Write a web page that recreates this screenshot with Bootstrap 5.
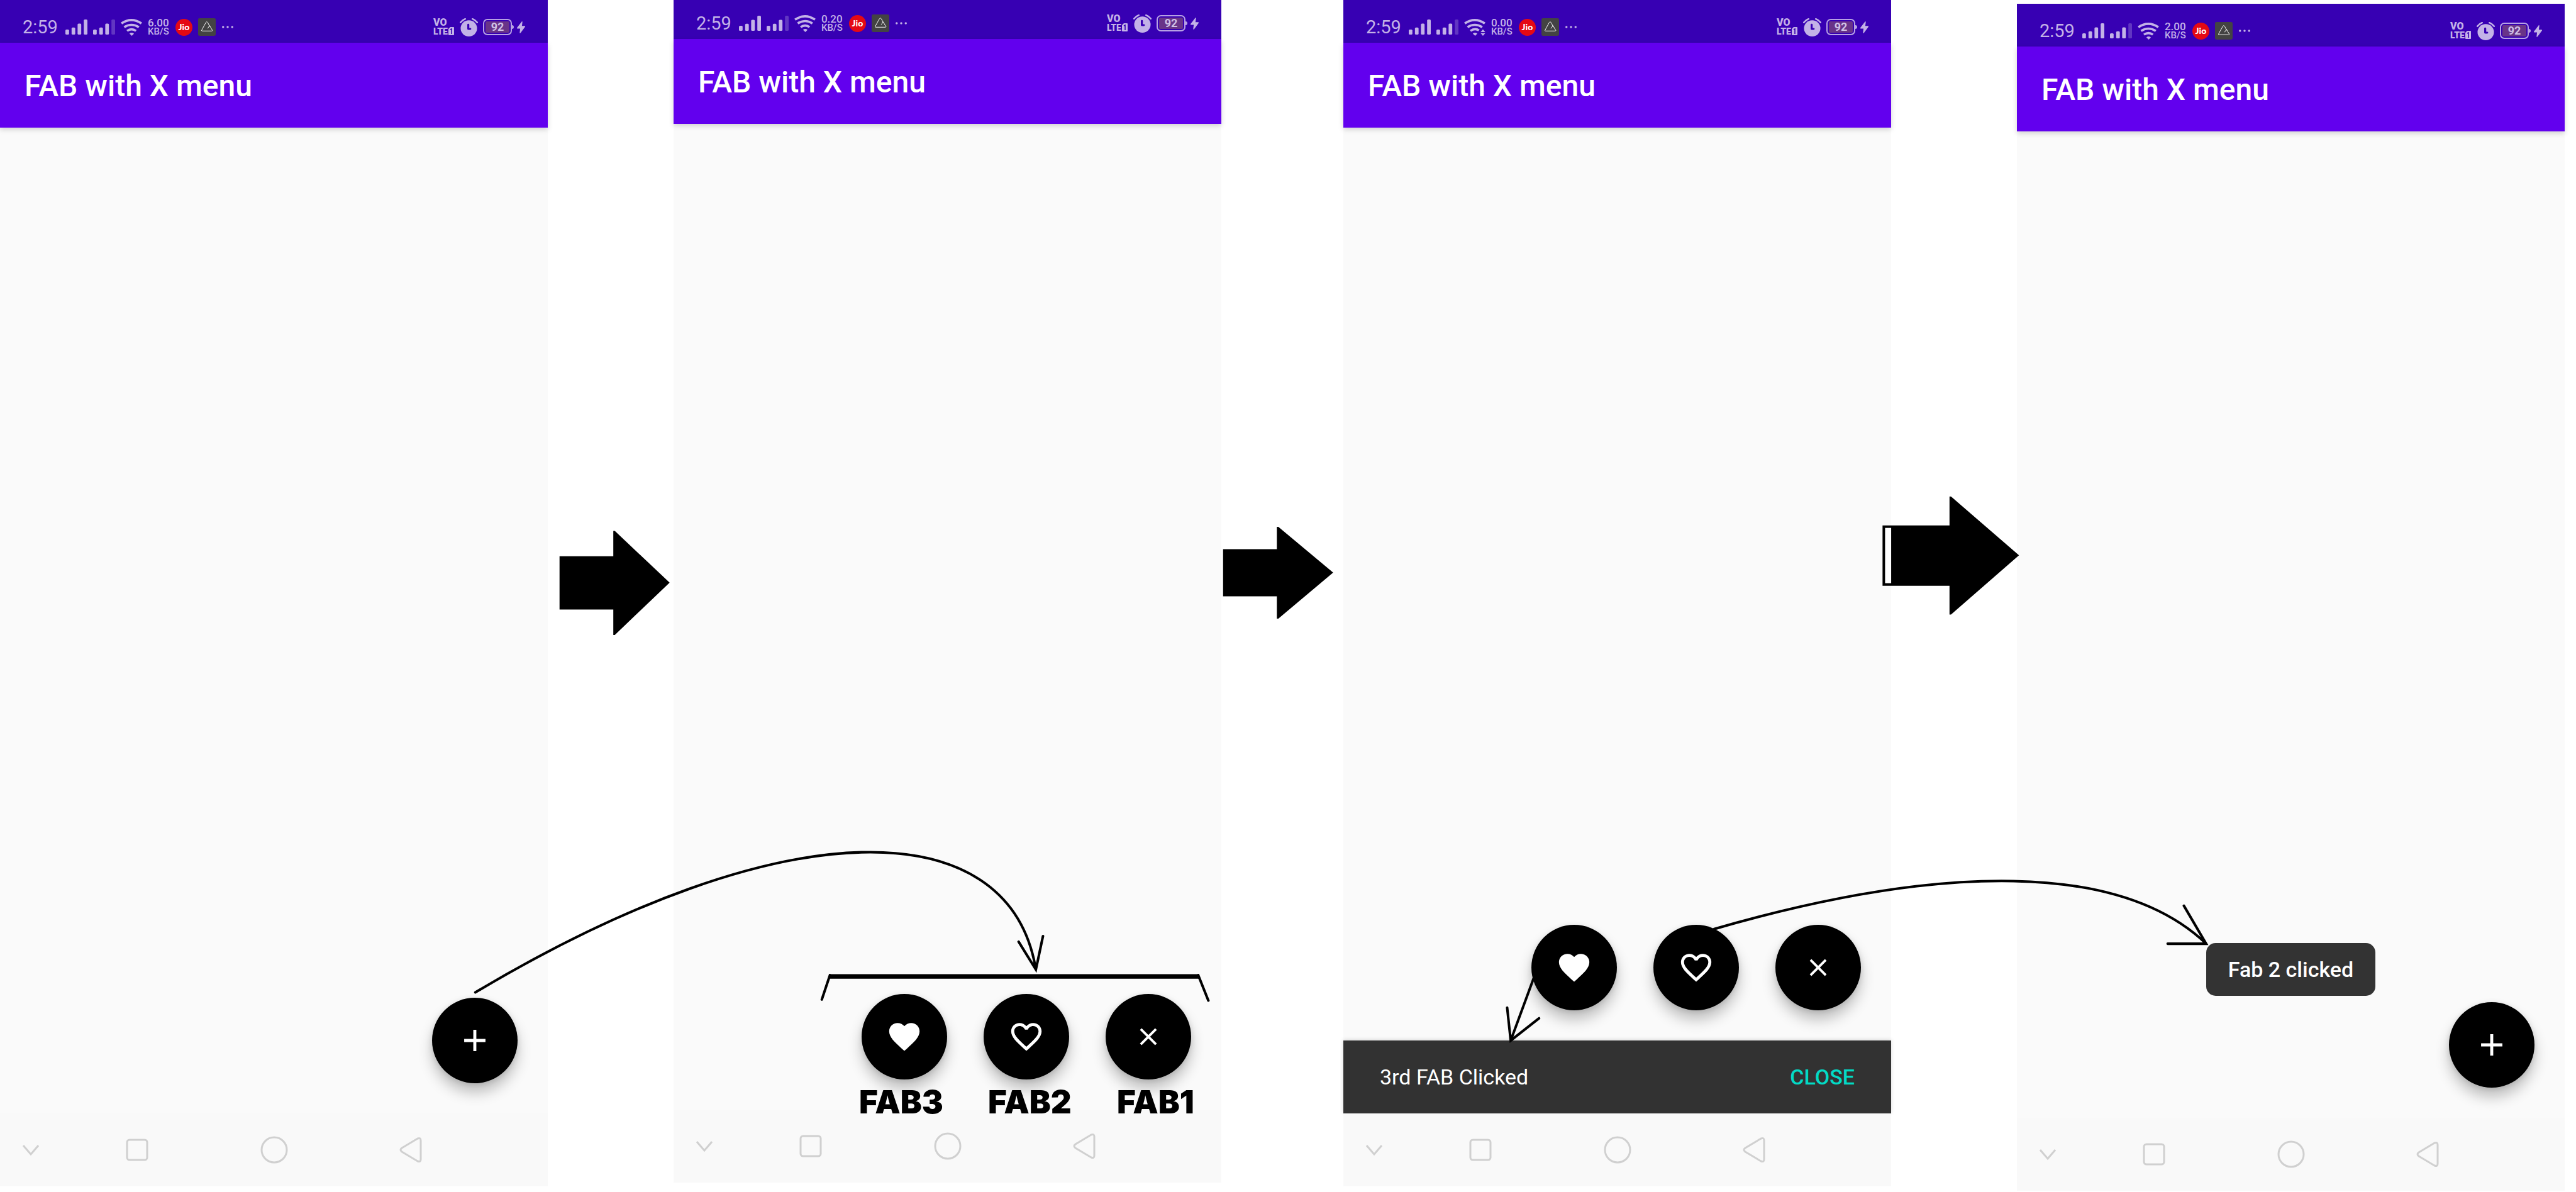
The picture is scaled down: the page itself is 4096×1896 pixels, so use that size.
<!DOCTYPE html>
<html lang="en">
<head>
<meta charset="utf-8">
<meta name="viewport" content="width=device-width, initial-scale=1">
<title>FAB with X menu</title>
<link rel="stylesheet" href="https://cdn.jsdelivr.net/npm/bootstrap@5.3.0/dist/css/bootstrap.min.css">
<style>
  body { font-family: Roboto, "Liberation Sans", sans-serif; background: #fff; overflow-x: hidden; }
  .storyboard { min-height: 100vh; padding-right: 18px; }
  .spacer { width: 200px; }
  .spacer-narrow { width: 194px; }

  .phone { flex: 1 1 0; min-width: 0; margin-bottom: 9px; background: #fafafa; }
  .phone-raised { margin-bottom: 15px; }
  .phone-raised .status-strip { height: 62px; }
  .phone-lowered { margin-top: 6px; margin-bottom: 2px; }

  .status-strip { height: 68px; padding: 0 36px 11px 36px; background: #3700b3; color: #c3b2e7; }
  .status-set { height: 28px; gap: 9px; }
  .status-time { font-size: 29px; line-height: 28px; margin-right: 3px; }
  .status-rate { width: 33px; font-size: 17px; line-height: 14px; font-weight: 500; }
  .status-rate span { display: block; font-size: 15px; }
  .carrier { width: 27px; height: 27px; margin-left: 2px; background: #e50914; color: #fff; font: 900 14px/26px Lato, sans-serif; text-align: center; }
  .volte { width: 33px; font-size: 16px; line-height: 14px; font-weight: 900; }
  .volte span { font-size: 14px; }
  .gauge { width: 46px; height: 26px; border: 2px solid #b7a2e4; border-radius: 7px; margin: 0 -1px; padding: 2px; }
  .gauge::after { content: ""; left: 44px; top: 8px; width: 3px; height: 6px; border-radius: 0 3px 3px 0; background: #b7a2e4; position: absolute; }
  .gauge span { flex: 1; background: #693488; color: #d0c2e6; border-radius: 2px; font-size: 18px; line-height: 18px; font-weight: 700; text-align: center; }

  .app-bar { height: 135px; padding: 2px 39px 0; background: #6200ee; color: #fff; box-shadow: 0 3px 8px rgba(0,0,0,.17); z-index: 1; }
  .app-title { font-size: 48px; line-height: 56px; font-weight: 500; }

  .fab-row { gap: 58px; padding: 0 48px 48px; }
  .fab { width: 136px; height: 136px; background: #000; color: #fff; border: 0; box-shadow: 0 15px 22px rgba(0,0,0,.24), 0 2px 8px rgba(0,0,0,.12); }
  .fab:hover { background: #222; color: #fff; }
  .fab svg { width: 58px; height: 58px; fill: currentColor; }

  .fab-labels { left: 295px; bottom: 98px; z-index: 2; }
  .fab-labels span { width: 205px; font: 900 51px/60px Inter, "Liberation Sans", sans-serif; color: #000; }

  .snack { height: 116px; padding: 0 58px; background: #323232; color: #fff; font-size: 34px; box-shadow: 0 -1px 6px rgba(0,0,0,.15); }
  .snack .btn { font-size: 34px; font-weight: 500; color: #03dac5; border: 0; }
  .toast-note { height: 84px; padding: 0 35px; margin-bottom: 10px; border-radius: 15px; background: #333; color: #fff; font-size: 34px; font-weight: 500; }

  .nav-keys { height: 116px; background: #f9f9f9; }
  .nav-keys .btn { border: 0; color: #d0d0d0; }
  .nav-keys svg { fill: none; stroke: currentColor; stroke-width: 3; }
  .key-hide { width: 12.5%; padding: 0 0 0 36px; text-align: left; }
  .key-set { width: 75%; }

  .notes { pointer-events: none; z-index: 3; width: 100%; height: auto; }
  .notes .pen { fill: none; stroke: #000; stroke-width: 5; stroke-linecap: round; }
</style>
<script src="https://cdn.jsdelivr.net/npm/bootstrap@5.3.0/dist/js/bootstrap.bundle.min.js"></script>
</head>
<body>
<svg width="0" height="0" class="position-absolute" aria-hidden="true">
  <symbol id="signal" viewBox="0 0 121 90" preserveAspectRatio="none"><g fill="#c3b2e7"><rect y="60" width="20" height="30" rx="6"/><rect x="34" y="48" width="20" height="42" rx="6"/><rect x="67" y="24" width="20" height="66" rx="6"/><rect x="101" width="20" height="90" rx="6"/></g></symbol>
  <symbol id="signal-low" viewBox="0 0 121 90" preserveAspectRatio="none"><g fill="#c3b2e7"><rect y="60" width="20" height="30" rx="6"/><rect x="34" y="48" width="20" height="42" rx="6"/><rect x="67" y="24" width="20" height="66" rx="6"/><rect x="101" width="20" height="90" rx="6" fill="#6136c2"/></g></symbol>
  <symbol id="wifi" viewBox="0 0 118 100" preserveAspectRatio="none"><g fill="none" stroke="#c3b2e7" stroke-width="13"><path d="M4 27Q59 -13 114 27"/><path d="M19 49Q59 21 100 49"/><path d="M35 71Q60 52 84 71"/></g><path d="M48 87Q60 76 73 87L61 100Z" fill="#c3b2e7"/></symbol>
  <symbol id="wifi-busy" viewBox="0 0 118 100" preserveAspectRatio="none"><g fill="none" stroke="#c3b2e7" stroke-width="13"><path d="M4 27Q59 -13 114 27"/><path d="M19 49Q59 21 100 49"/><path d="M35 71Q60 52 82 68"/></g><path d="M48 87Q60 76 73 87L61 100ZM91 78L104 62L117 78ZM91 84L104 100L117 84Z" fill="#c3b2e7"/></symbol>
  <symbol id="peak" viewBox="0 0 98 105" preserveAspectRatio="none"><rect width="98" height="105" rx="8" fill="#434343"/><path d="M53 61L64 44L80 73Q80 76 76 76H22Q18 76 20 71L43 26Q48 16 54 26L65 50" fill="none" stroke="#fff" stroke-width="3.5"/></symbol>
  <symbol id="dots" viewBox="0 0 72 16"><g fill="#c3b2e7"><circle cx="7" cy="8" r="7"/><circle cx="36" cy="8" r="7"/><circle cx="65" cy="8" r="7"/></g></symbol>
  <symbol id="sim" viewBox="0 0 9 13"><path d="M3 0H8Q9 0 9 1V12Q9 13 8 13H1Q0 13 0 12V3Z" fill="#c3b2e7"/><path d="M3 4L5 3V11" fill="none" stroke="#3700b3" stroke-width="1.6"/></symbol>
  <symbol id="alarm" viewBox="0 0 100 108" preserveAspectRatio="none"><ellipse cx="50" cy="60" rx="45" ry="48" fill="#c3b2e7"/><path d="M4 25Q16 9 30 4M96 25Q84 9 70 4" fill="none" stroke="#c3b2e7" stroke-width="9" stroke-linecap="round"/><path d="M47 38V63H58" fill="none" stroke="#3700b3" stroke-width="11" stroke-linecap="round" stroke-linejoin="round"/></symbol>
  <symbol id="bolt" viewBox="0 0 46 70" preserveAspectRatio="none"><path d="M28 0L31 2L28 27H45L46 31L20 68L15 69L18 42H1L0 38Z" fill="#c3b2e7"/></symbol>
  <symbol id="plus" viewBox="0 0 24 24"><path d="M19 13h-6v6h-2v-6H5v-2h6V5h2v6h6z"/></symbol>
  <symbol id="heart" viewBox="0 0 24 24"><path d="M12 21.35l-1.45-1.32C5.4 15.36 2 12.28 2 8.5 2 5.42 4.42 3 7.5 3c1.74 0 3.41.81 4.5 2.09C13.09 3.81 14.76 3 16.5 3 19.58 3 22 5.42 22 8.5c0 3.78-3.4 6.86-8.55 11.54L12 21.35z"/></symbol>
  <symbol id="heart-line" viewBox="0 0 24 24"><path d="M16.5 3c-1.74 0-3.41.81-4.5 2.09C10.91 3.81 9.24 3 7.5 3 4.42 3 2 5.42 2 8.5c0 3.78 3.4 6.86 8.55 11.54L12 21.35l1.45-1.32C18.6 15.36 22 12.28 22 8.5 22 5.42 19.58 3 16.5 3zm-4.4 15.55l-.1.1-.1-.1C7.14 14.24 4 11.39 4 8.5 4 6.5 5.5 5 7.5 5c1.54 0 3.04.99 3.57 2.36h1.87C13.46 5.99 14.96 5 16.5 5c2 0 3.5 1.5 3.5 3.5 0 2.89-3.14 5.74-7.9 10.05z"/></symbol>
  <symbol id="cross" viewBox="0 0 24 24"><path d="M7 7L17 17M17 7L7 17" fill="none" stroke="#fff" stroke-width="1.6"/></symbol>
  <symbol id="key-hide" viewBox="0 0 26 18"><path d="M1 1L13 15L25 1"/></symbol>
  <symbol id="key-recent" viewBox="0 0 36 36"><rect x="2" y="2" width="32" height="32" rx="4"/></symbol>
  <symbol id="key-home" viewBox="0 0 44 44"><circle cx="22" cy="22" r="20"/></symbol>
  <symbol id="key-back" viewBox="0 0 36 42"><path d="M29 3L4 18Q0 21 4 24L29 39Q34 41 34 36V6Q34 1 29 3Z"/></symbol>
</svg>

<main class="storyboard d-flex align-items-stretch position-relative">

  <section class="phone d-flex flex-column" aria-label="Closed menu">
    <div class="status-strip d-flex justify-content-between align-items-end">
      <div class="status-set d-flex align-items-center">
        <span class="status-time">2:59</span>
        <svg width="35" height="24"><use href="#signal"/></svg>
        <svg width="35" height="24"><use href="#signal-low"/></svg>
        <svg width="34" height="27"><use href="#wifi"/></svg>
        <div class="status-rate">6.00<span>KB/S</span></div>
        <span class="carrier rounded-circle">Jio</span>
        <svg width="28" height="28"><use href="#peak"/></svg>
        <svg width="20" height="4"><use href="#dots"/></svg>
      </div>
      <div class="status-set d-flex align-items-center">
        <div class="volte">VO<div class="d-flex justify-content-between"><span>LTE</span><svg width="9" height="13"><use href="#sim"/></svg></div></div>
        <svg width="29" height="29"><use href="#alarm"/></svg>
        <div class="gauge d-flex position-relative"><span>92</span></div>
        <svg width="13" height="19"><use href="#bolt"/></svg>
      </div>
    </div>
    <header class="app-bar d-flex align-items-center"><h1 class="app-title m-0">FAB with X menu</h1></header>
    <div class="flex-grow-1 d-flex flex-column justify-content-end">
      <div class="fab-row d-flex justify-content-end">
        <button type="button" class="fab btn rounded-circle p-0" aria-label="Open menu"><svg><use href="#plus"/></svg></button>
      </div>
    </div>
    <nav class="nav-keys d-flex align-items-center" aria-label="System keys">
      <button type="button" class="btn key-hide" aria-label="Hide"><svg width="26" height="18"><use href="#key-hide"/></svg></button>
      <div class="key-set d-flex">
        <button type="button" class="btn col-4" aria-label="Recent"><svg width="36" height="36"><use href="#key-recent"/></svg></button>
        <button type="button" class="btn col-4" aria-label="Home"><svg width="44" height="44"><use href="#key-home"/></svg></button>
        <button type="button" class="btn col-4" aria-label="Back"><svg width="36" height="42"><use href="#key-back"/></svg></button>
      </div>
    </nav>
  </section>

  <div class="spacer flex-shrink-0"></div>

  <section class="phone phone-raised d-flex flex-column position-relative" aria-label="Open menu">
    <div class="status-strip d-flex justify-content-between align-items-end">
      <div class="status-set d-flex align-items-center">
        <span class="status-time">2:59</span>
        <svg width="35" height="24"><use href="#signal"/></svg>
        <svg width="35" height="24"><use href="#signal-low"/></svg>
        <svg width="34" height="27"><use href="#wifi"/></svg>
        <div class="status-rate">0.20<span>KB/S</span></div>
        <span class="carrier rounded-circle">Jio</span>
        <svg width="28" height="28"><use href="#peak"/></svg>
        <svg width="20" height="4"><use href="#dots"/></svg>
      </div>
      <div class="status-set d-flex align-items-center">
        <div class="volte">VO<div class="d-flex justify-content-between"><span>LTE</span><svg width="9" height="13"><use href="#sim"/></svg></div></div>
        <svg width="29" height="29"><use href="#alarm"/></svg>
        <div class="gauge d-flex position-relative"><span>92</span></div>
        <svg width="13" height="19"><use href="#bolt"/></svg>
      </div>
    </div>
    <header class="app-bar d-flex align-items-center"><h1 class="app-title m-0">FAB with X menu</h1></header>
    <div class="flex-grow-1 d-flex flex-column justify-content-end">
      <div class="fab-row d-flex justify-content-end">
        <button type="button" class="fab btn rounded-circle p-0" aria-label="Favourite"><svg><use href="#heart"/></svg></button>
        <button type="button" class="fab btn rounded-circle p-0" aria-label="Like"><svg><use href="#heart-line"/></svg></button>
        <button type="button" class="fab btn rounded-circle p-0" aria-label="Close menu"><svg><use href="#cross"/></svg></button>
      </div>
    </div>
    <nav class="nav-keys d-flex align-items-center" aria-label="System keys">
      <button type="button" class="btn key-hide" aria-label="Hide"><svg width="26" height="18"><use href="#key-hide"/></svg></button>
      <div class="key-set d-flex">
        <button type="button" class="btn col-4" aria-label="Recent"><svg width="36" height="36"><use href="#key-recent"/></svg></button>
        <button type="button" class="btn col-4" aria-label="Home"><svg width="44" height="44"><use href="#key-home"/></svg></button>
        <button type="button" class="btn col-4" aria-label="Back"><svg width="36" height="42"><use href="#key-back"/></svg></button>
      </div>
    </nav>
    <div class="fab-labels d-flex position-absolute"><span>FAB3</span><span>FAB2</span><span>FAB1</span></div>
  </section>

  <div class="spacer-narrow flex-shrink-0"></div>

  <section class="phone d-flex flex-column" aria-label="Snackbar shown">
    <div class="status-strip d-flex justify-content-between align-items-end">
      <div class="status-set d-flex align-items-center">
        <span class="status-time">2:59</span>
        <svg width="35" height="24"><use href="#signal"/></svg>
        <svg width="35" height="24"><use href="#signal-low"/></svg>
        <svg width="34" height="27"><use href="#wifi-busy"/></svg>
        <div class="status-rate">0.00<span>KB/S</span></div>
        <span class="carrier rounded-circle">Jio</span>
        <svg width="28" height="28"><use href="#peak"/></svg>
        <svg width="20" height="4"><use href="#dots"/></svg>
      </div>
      <div class="status-set d-flex align-items-center">
        <div class="volte">VO<div class="d-flex justify-content-between"><span>LTE</span><svg width="9" height="13"><use href="#sim"/></svg></div></div>
        <svg width="29" height="29"><use href="#alarm"/></svg>
        <div class="gauge d-flex position-relative"><span>92</span></div>
        <svg width="13" height="19"><use href="#bolt"/></svg>
      </div>
    </div>
    <header class="app-bar d-flex align-items-center"><h1 class="app-title m-0">FAB with X menu</h1></header>
    <div class="flex-grow-1 d-flex flex-column justify-content-end">
      <div class="fab-row d-flex justify-content-end">
        <button type="button" class="fab btn rounded-circle p-0" aria-label="Favourite"><svg><use href="#heart"/></svg></button>
        <button type="button" class="fab btn rounded-circle p-0" aria-label="Like"><svg><use href="#heart-line"/></svg></button>
        <button type="button" class="fab btn rounded-circle p-0" aria-label="Close menu"><svg><use href="#cross"/></svg></button>
      </div>
      <div class="snack d-flex justify-content-between align-items-center" role="status">
        <span>3rd FAB Clicked</span>
        <button type="button" class="btn p-0">CLOSE</button>
      </div>
    </div>
    <nav class="nav-keys d-flex align-items-center" aria-label="System keys">
      <button type="button" class="btn key-hide" aria-label="Hide"><svg width="26" height="18"><use href="#key-hide"/></svg></button>
      <div class="key-set d-flex">
        <button type="button" class="btn col-4" aria-label="Recent"><svg width="36" height="36"><use href="#key-recent"/></svg></button>
        <button type="button" class="btn col-4" aria-label="Home"><svg width="44" height="44"><use href="#key-home"/></svg></button>
        <button type="button" class="btn col-4" aria-label="Back"><svg width="36" height="42"><use href="#key-back"/></svg></button>
      </div>
    </nav>
  </section>

  <div class="spacer flex-shrink-0"></div>

  <section class="phone phone-lowered d-flex flex-column" aria-label="Toast shown">
    <div class="status-strip d-flex justify-content-between align-items-end">
      <div class="status-set d-flex align-items-center">
        <span class="status-time">2:59</span>
        <svg width="35" height="24"><use href="#signal"/></svg>
        <svg width="35" height="24"><use href="#signal-low"/></svg>
        <svg width="34" height="27"><use href="#wifi"/></svg>
        <div class="status-rate">2.00<span>KB/S</span></div>
        <span class="carrier rounded-circle">Jio</span>
        <svg width="28" height="28"><use href="#peak"/></svg>
        <svg width="20" height="4"><use href="#dots"/></svg>
      </div>
      <div class="status-set d-flex align-items-center">
        <div class="volte">VO<div class="d-flex justify-content-between"><span>LTE</span><svg width="9" height="13"><use href="#sim"/></svg></div></div>
        <svg width="29" height="29"><use href="#alarm"/></svg>
        <div class="gauge d-flex position-relative"><span>92</span></div>
        <svg width="13" height="19"><use href="#bolt"/></svg>
      </div>
    </div>
    <header class="app-bar d-flex align-items-center"><h1 class="app-title m-0">FAB with X menu</h1></header>
    <div class="flex-grow-1 d-flex flex-column justify-content-end">
      <div class="toast-note d-flex align-items-center align-self-center" role="status">Fab 2 clicked</div>
      <div class="fab-row d-flex justify-content-end">
        <button type="button" class="fab btn rounded-circle p-0" aria-label="Open menu"><svg><use href="#plus"/></svg></button>
      </div>
    </div>
    <nav class="nav-keys d-flex align-items-center" aria-label="System keys">
      <button type="button" class="btn key-hide" aria-label="Hide"><svg width="26" height="18"><use href="#key-hide"/></svg></button>
      <div class="key-set d-flex">
        <button type="button" class="btn col-4" aria-label="Recent"><svg width="36" height="36"><use href="#key-recent"/></svg></button>
        <button type="button" class="btn col-4" aria-label="Home"><svg width="44" height="44"><use href="#key-home"/></svg></button>
        <button type="button" class="btn col-4" aria-label="Back"><svg width="36" height="42"><use href="#key-back"/></svg></button>
      </div>
    </nav>
  </section>

  <!-- Arrows drawn across the four screens -->
  <svg class="notes position-absolute top-0 start-0" viewBox="0 0 5078 2350" aria-hidden="true">
    <path d="M1103 1097H1209V1047H1212L1320 1149L1212 1252H1209V1202H1103Z"/>
    <path d="M2411 1083H2517V1039H2520L2628 1129L2520 1220H2517V1176H2411Z"/>
    <path d="M3711 1036H3843V979H3846L3980 1095L3846 1212H3843V1155H3711Z"/>
    <rect x="3716" y="1041" width="12" height="109" fill="#fff"/>
    <path class="pen" d="M937 1957C1545 1594 1990 1598 2042 1912M2008 1857L2042 1912L2056 1846"/>
    <path class="pen" d="M1636 1923L1620 1971M2362 1923L2382 1973"/>
    <rect x="1634" y="1921" width="730" height="9"/>
    <path class="pen" d="M3024 1927L2978 2052M2971 1987L2978 2052L3034 2008"/>
    <path class="pen" d="M3379 1832C3829 1702 4180 1700 4349 1861M4305 1786L4349 1861H4273"/>
  </svg>
</main>
</body>
</html>
